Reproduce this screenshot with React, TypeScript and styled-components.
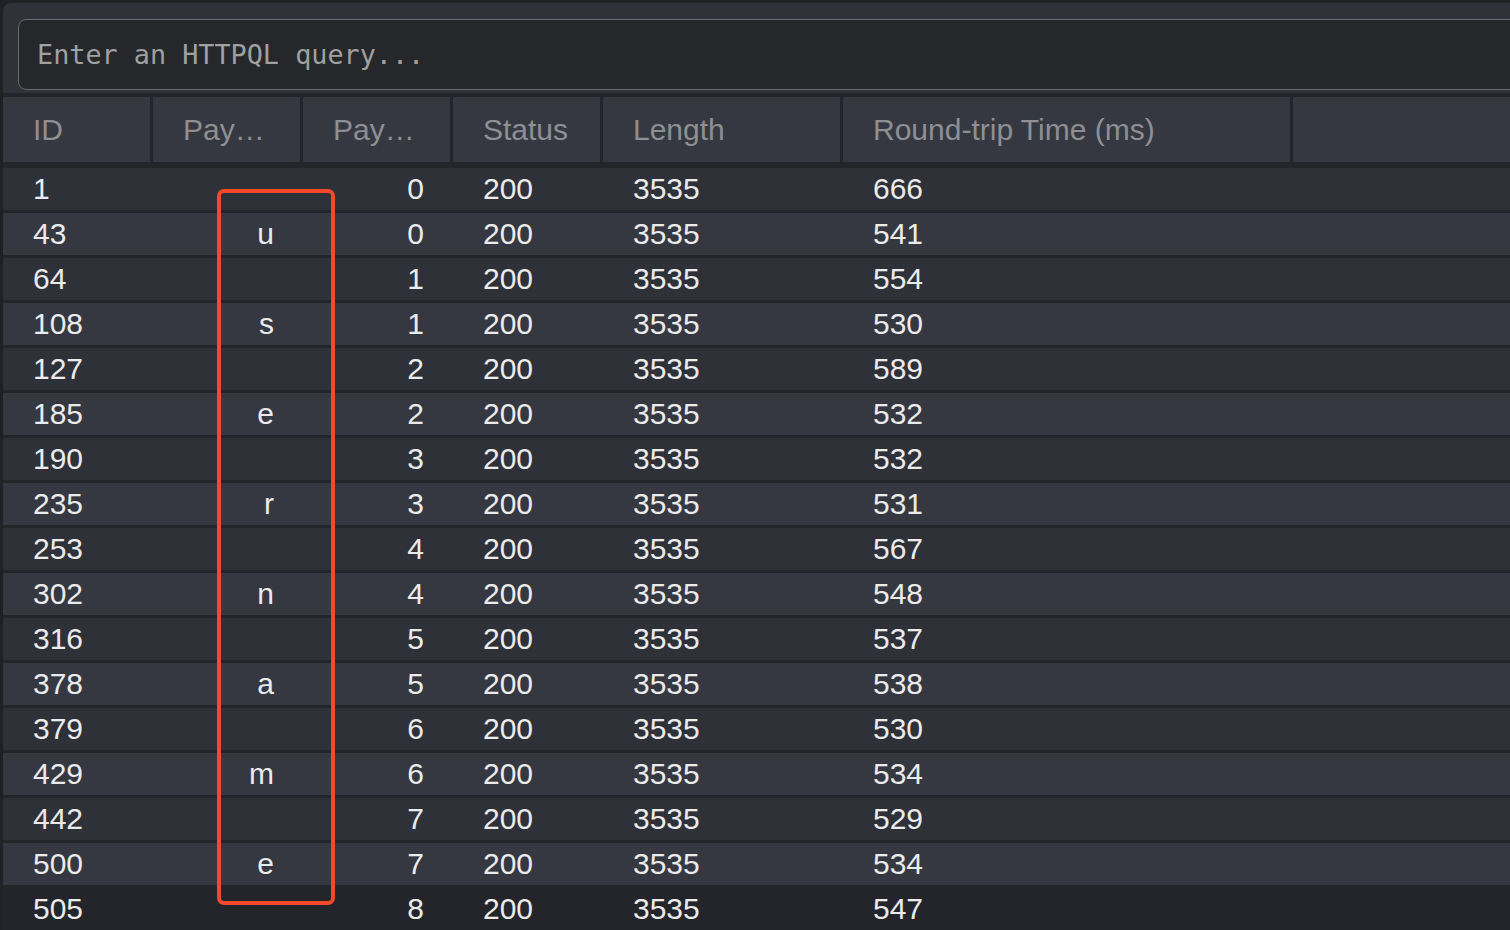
import React from "react";
import styled, { createGlobalStyle } from "styled-components";

const GlobalStyle = createGlobalStyle`
  html, body {
    margin: 0;
    padding: 0;
    background: #1f2124;
    overflow: hidden;
    width: 1510px;
    height: 930px;
  }
  #root {
    padding: 3px 0 0 3px;
    box-sizing: border-box;
  }
`;

const Panel = styled.div`
  width: 1530px;
  height: 960px;
  background: #2f3239;
  border-radius: 8px 0 0 0;
  overflow: hidden;
  display: flex;
  flex-direction: column;
`;

const QueryBar = styled.div`
  padding: 16px 0 3px 15px;
`;

const QueryInput = styled.input`
  box-sizing: border-box;
  width: 100%;
  height: 71px;
  border: 1px solid #66696e;
  border-radius: 8px;
  background: #25272b;
  padding: 0 18px;
  font-family: "DejaVu Sans Mono", "Liberation Mono", monospace;
  font-size: 26.8px;
  color: #d0d0d0;
  outline: none;
  &::placeholder {
    color: #a0a0a0;
  }
`;

const Table = styled.div`
  position: relative;
  background: #23252a;
  padding-top: 4px;
  display: flex;
  flex-direction: column;
  gap: 3px;
  font-family: "Liberation Sans", Arial, Helvetica, sans-serif;
  font-size: 30px;
`;

const columns = "147px 147px 147px 147px 237px 447px 1fr";

const HeaderRow = styled.div`
  display: grid;
  grid-template-columns: ${columns};
  column-gap: 3px;
  height: 65px;
  margin-bottom: 3px;
`;

const HeaderCell = styled.div`
  background: #353841;
  color: #8e8f93;
  display: flex;
  align-items: center;
  padding: 0 30px;
  min-width: 0;
  white-space: nowrap;
`;

const Row = styled.div<{ $tone: "dark" | "light" | "base" }>`
  display: grid;
  grid-template-columns: ${columns};
  column-gap: 3px;
  height: 42px;
  background: ${(p) =>
    p.$tone === "light" ? "#353841" : p.$tone === "dark" ? "#2e3138" : "#23252a"};
`;

const Cell = styled.div<{ $align?: "left" | "right" }>`
  color: #ebebeb;
  display: flex;
  align-items: center;
  justify-content: ${(p) => (p.$align === "right" ? "flex-end" : "flex-start")};
  padding: ${(p) => (p.$align === "right" ? "0 26px 0 0" : "0 0 0 30px")};
  white-space: nowrap;
  overflow: hidden;
`;

const Highlight = styled.div`
  position: absolute;
  left: 214px;
  top: 96px;
  width: 118px;
  height: 716px;
  box-sizing: border-box;
  border: 4px solid #f1492a;
  border-radius: 7px;
  pointer-events: none;
`;

type Req = [number, string, number, number, number, number];

const rows: Req[] = [
  [1, "", 0, 200, 3535, 666],
  [43, "u", 0, 200, 3535, 541],
  [64, "", 1, 200, 3535, 554],
  [108, "s", 1, 200, 3535, 530],
  [127, "", 2, 200, 3535, 589],
  [185, "e", 2, 200, 3535, 532],
  [190, "", 3, 200, 3535, 532],
  [235, "r", 3, 200, 3535, 531],
  [253, "", 4, 200, 3535, 567],
  [302, "n", 4, 200, 3535, 548],
  [316, "", 5, 200, 3535, 537],
  [378, "a", 5, 200, 3535, 538],
  [379, "", 6, 200, 3535, 530],
  [429, "m", 6, 200, 3535, 534],
  [442, "", 7, 200, 3535, 529],
  [500, "e", 7, 200, 3535, 534],
  [505, "", 8, 200, 3535, 547],
];

const headers = ["ID", "Pay…", "Pay…", "Status", "Length", "Round-trip Time (ms)", ""];

export default function App() {
  return (
    <>
      <GlobalStyle />
      <Panel>
        <QueryBar>
          <QueryInput placeholder="Enter an HTTPQL query..." />
        </QueryBar>
        <Table>
          <HeaderRow>
            {headers.map((h, i) => (
              <HeaderCell key={i}>{h}</HeaderCell>
            ))}
          </HeaderRow>
          {rows.map((r, i) => (
            <Row key={r[0]} $tone={i === rows.length - 1 ? "base" : i % 2 === 0 ? "dark" : "light"}>
              <Cell>{r[0]}</Cell>
              <Cell $align="right">{r[1]}</Cell>
              <Cell $align="right">{r[2]}</Cell>
              <Cell>{r[3]}</Cell>
              <Cell>{r[4]}</Cell>
              <Cell>{r[5]}</Cell>
              <Cell />
            </Row>
          ))}
          <Highlight />
        </Table>
      </Panel>
    </>
  );
}
